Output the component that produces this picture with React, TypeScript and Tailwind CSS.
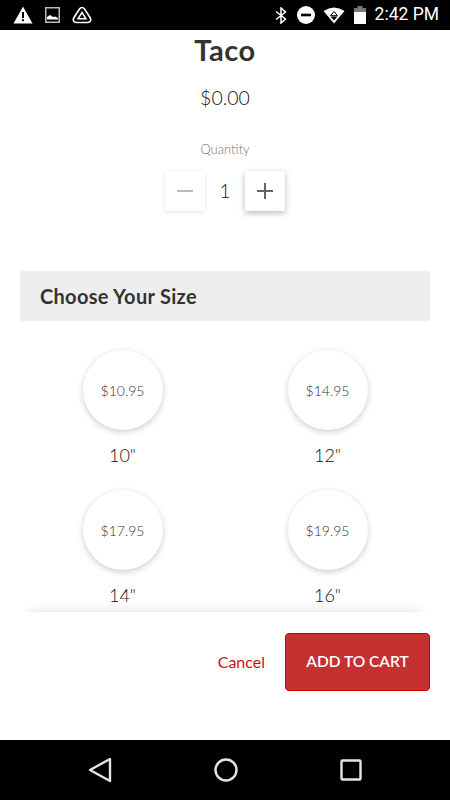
import React from "react";

const font = "font-['Lato','Noto_Sans',sans-serif]";

const sizes = [
  { price: "$10.95", label: '10"' },
  { price: "$14.95", label: '12"' },
  { price: "$17.95", label: '14"' },
  { price: "$19.95", label: '16"' },
];

function StatusBar() {
  return (
    <div className="flex h-[30px] shrink-0 items-center justify-between bg-black pl-[13px] pr-[11px]">
      <div className="flex items-center gap-[12px]">
        <svg width="20" height="18" viewBox="0 0 20 18">
          <path d="M10 0.5 L19.5 17.5 H0.5 Z" fill="#fff" />
          <rect x="9" y="6" width="2" height="6" fill="#000" />
          <rect x="9" y="13.2" width="2" height="2" fill="#000" />
        </svg>
        <svg width="15" height="16" viewBox="0 0 15 16">
          <rect x="0.75" y="0.75" width="13.5" height="14.5" fill="none" stroke="#bbb" strokeWidth="1.5" />
          <path d="M2 12.5 L2 10 L5 8 L8 10 L10 9.5 L13 11 V12.5 Z" fill="#fff" />
        </svg>
        <svg width="20" height="18" viewBox="0 0 20 18" fill="none" stroke="#fff">
          <path d="M10 1.5 Q11.5 1.5 12.5 3 L18 11.5 Q19.5 14 18 15.5 Q17 16.5 15.5 16.5 H4.5 Q3 16.5 2 15.5 Q0.5 14 2 11.5 L7.5 3 Q8.5 1.5 10 1.5 Z" strokeWidth="1.6" />
          <path d="M10 6.5 L14 12.8 H6 Z" strokeWidth="1.5" />
        </svg>
      </div>
      <div className="flex items-center">
        <svg width="12" height="17" viewBox="0 0 12 17" fill="none" stroke="#fff" strokeWidth="1.5">
          <path d="M1 4.5 L10.5 12 L6 16 V1 L10.5 5 L1 12.5" />
        </svg>
        <svg className="ml-[10px]" width="18" height="18" viewBox="0 0 18 18">
          <circle cx="9" cy="9" r="9" fill="#fff" />
          <rect x="4" y="7.7" width="10" height="2.6" fill="#000" />
        </svg>
        <svg className="ml-[8px]" width="22" height="17" viewBox="0 0 22 17">
          <path d="M0.5 4 Q11 -3 21.5 4 L11 16.5 Z" fill="#fff" />
          <path d="M11 4.5 L14.5 8.7 H7.5 Z" fill="none" stroke="#000" strokeWidth="1" />
          <path d="M7.5 9.5 H14.5 L11 13.5 Z" fill="#000" />
        </svg>
        <svg className="ml-[9px]" width="12" height="18" viewBox="0 0 12 18">
          <rect x="3.5" y="0" width="5" height="2" fill="#777" />
          <rect x="0" y="2" width="12" height="4" fill="#777" />
          <rect x="0" y="6" width="12" height="12" fill="#fff" />
        </svg>
        <span className="ml-[9px] font-['Roboto',sans-serif] text-[17.5px] leading-none text-white">2:42 PM</span>
      </div>
    </div>
  );
}

function SizeOption({ price, label }: { price: string; label: string }) {
  return (
    <div className="flex flex-col items-center">
      <div className="flex h-20 w-20 items-center justify-center rounded-full bg-white text-[14px] font-light text-[#333] shadow-[0_2px_6px_rgba(0,0,0,0.2)]">
        {price}
      </div>
      <div className="mt-[14px] h-[26px] text-[18px] font-light leading-[22px] text-[#111]">{label}</div>
    </div>
  );
}

export default function App() {
  return (
    <div className={`flex h-[800px] w-[450px] flex-col overflow-hidden bg-white ${font}`}>
      <StatusBar />

      {/* Scrolling product area */}
      <div className="h-[582px] shrink-0 overflow-hidden">
        <h1 className="mt-[3px] text-center text-[29px] font-bold leading-[34px] tracking-[0.5px] text-[#333]">Taco</h1>
        <div className="mt-[19px] text-center text-[19.5px] font-light leading-[24px] text-[#111]">$0.00</div>
        <div className="mt-[31px] text-center text-[13px] font-light leading-[16px] text-[#777]">Quantity</div>

        <div className="mt-[14px] flex items-center justify-center">
          <div className="flex h-10 w-10 items-center justify-center rounded-[2px] bg-white shadow-[0_1px_4px_rgba(0,0,0,0.12)]">
            <div className="h-[2px] w-4 bg-[#bbb]" />
          </div>
          <div className="w-10 text-center text-[19px] font-light text-[#111]">1</div>
          <div className="relative flex h-10 w-10 items-center justify-center rounded-[2px] bg-white shadow-[0_2px_6px_rgba(0,0,0,0.28)]">
            <div className="h-[2px] w-4 bg-[#666]" />
            <div className="absolute h-4 w-[2px] bg-[#666]" />
          </div>
        </div>

        <div className="mx-5 mt-[60px] flex h-[50px] items-center rounded-[2px] bg-[#eeeeee] px-5 pb-[1px] text-[20px] font-bold tracking-[0.3px] text-[#333]">
          Choose Your Size
        </div>

        <div className="mt-[29px] grid grid-cols-2 px-5">
          {sizes.map((s) => (
            <div key={s.label} className="mb-[20px] flex justify-center">
              <SizeOption price={s.price} label={s.label} />
            </div>
          ))}
        </div>
      </div>

      {/* Footer */}
      <div className="relative flex flex-1 items-start justify-end bg-white pr-5 pt-[21px]">
        <div className="absolute inset-x-0 bottom-full h-5 overflow-hidden">
          <div className="absolute inset-x-[30px] top-full h-4 shadow-[0_-1px_12px_rgba(0,0,0,0.12)]" />
        </div>
        <button className="mr-5 h-[58px] text-[16px] text-[#c70f0f]">Cancel</button>
        <button className="h-[58px] w-[145px] rounded-[4px] border border-[#c00] bg-[#c53030] text-[15.5px] font-semibold text-white">
          ADD TO CART
        </button>
      </div>

      {/* Android nav bar */}
      <div className="flex h-[60px] shrink-0 items-center justify-center gap-[102px] bg-black pb-[1px] pr-[1px]">
        <svg width="24" height="26" viewBox="0 0 24 26" fill="none" stroke="#e5e5e5" strokeWidth="2.4" strokeLinejoin="round">
          <path d="M22 2 V24 L2 13 Z" />
        </svg>
        <svg width="24" height="24" viewBox="0 0 24 24" fill="none" stroke="#e5e5e5" strokeWidth="2.4">
          <circle cx="12" cy="12" r="10.5" />
        </svg>
        <svg width="22" height="22" viewBox="0 0 22 22" fill="none" stroke="#e5e5e5" strokeWidth="2.4" strokeLinejoin="round">
          <rect x="1.5" y="1.5" width="19" height="19" rx="1" />
        </svg>
      </div>
    </div>
  );
}
